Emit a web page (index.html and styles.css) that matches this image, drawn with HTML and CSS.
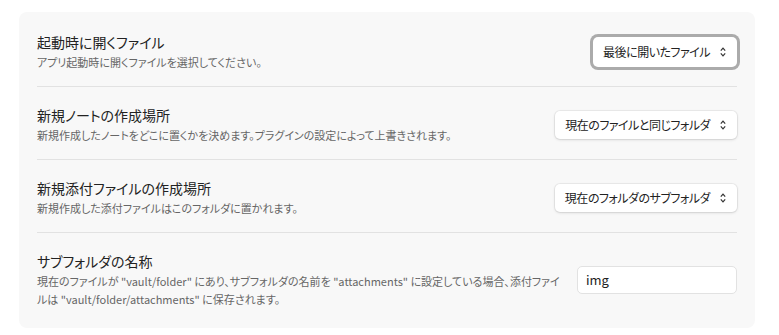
FILE: index.html
```html
<!DOCTYPE html>
<html>
	<head>
<meta charset="UTF-8">
<title>ファイルとリンク</title>
<link rel="stylesheet" href="styles.css">
	</head>
	<body>
        <div class="paneel">
            <div class="item eerste">
                <div class="info">
                    <div class="naam">起動時に開くファイル</div>
                    <div class="uitleg">アプリ起動時に開くファイルを選択してください。</div>
                </div>
                <div class="keuze focus">
                    <span>最後に開いたファイル</span>
                    <svg class="pijl" width="6" height="10" viewBox="0 0 6 10"><path d="M0.8 3.6 L3 1.2 L5.2 3.6 M0.8 6.4 L3 8.8 L5.2 6.4" fill="none" stroke="#333" stroke-width="1.2"/></svg>
                </div>
            </div>
            <div class="item">
                <div class="info">
                    <div class="naam">新規ノートの作成場所</div>
                    <div class="uitleg">新規作成したノートをどこに置くかを決めます。プラグインの設定によって上書きされます。</div>
                </div>
                <div class="keuze">
                    <span>現在のファイルと同じフォルダ</span>
                    <svg class="pijl" width="6" height="10" viewBox="0 0 6 10"><path d="M0.8 3.6 L3 1.2 L5.2 3.6 M0.8 6.4 L3 8.8 L5.2 6.4" fill="none" stroke="#333" stroke-width="1.2"/></svg>
                </div>
            </div>
            <div class="item">
                <div class="info">
                    <div class="naam">新規添付ファイルの作成場所</div>
                    <div class="uitleg">新規作成した添付ファイルはこのフォルダに置かれます。</div>
                </div>
                <div class="keuze">
                    <span>現在のフォルダのサブフォルダ</span>
                    <svg class="pijl" width="6" height="10" viewBox="0 0 6 10"><path d="M0.8 3.6 L3 1.2 L5.2 3.6 M0.8 6.4 L3 8.8 L5.2 6.4" fill="none" stroke="#333" stroke-width="1.2"/></svg>
                </div>
            </div>
            <div class="item laatste">
                <div class="info">
                    <div class="naam">サブフォルダの名称</div>
                    <div class="uitleg">現在のファイルが "vault/folder" にあり、サブフォルダの名前を "attachments" に設定している場合、添付ファイルは "vault/folder/attachments" に保存されます。</div>
                </div>
                <input class="veld" type="text" value="img">
            </div>
        </div>
	</body>
</html>
```

FILE: styles.css
```css
body {
    margin: 0;
    background: #fff;
    font-family: "Noto Sans CJK JP", "Noto Sans", sans-serif;
    font-feature-settings: "palt";
    color: #222;
}
.paneel {
    margin: 12px 24px 0 19px;
    width: 700px;
    padding: 0 18px 5px;
    background: #f8f8f8;
    border-radius: 8px;
}
.item {
    display: flex;
    align-items: center;
    padding: 18px 0 15px;
    border-bottom: 1px solid #e2e2e2;
}
.item.eerste {
    padding-top: 20px;
}
.item.laatste {
    border-bottom: none;
}
.info {
    flex: 1;
    margin-right: 16px;
}
.naam {
    font-size: 14px;
    line-height: 20px;
    color: #222;
}
.uitleg {
    font-size: 11px;
    line-height: 18px;
    margin-top: 1px;
    color: #666;
}
.keuze {
    display: flex;
    align-items: center;
    height: 28px;
    padding: 0 11px 0 10px;
    background: #fff;
    border-radius: 5px;
    box-shadow: 0 0 0 1px rgba(0,0,0,0.05), 0 1px 3px rgba(0,0,0,0.12);
    font-size: 12px;
    letter-spacing: -0.5px;
    color: #222;
    white-space: nowrap;
}
.keuze span {
    margin-right: 10px;
}
.keuze.focus {
    height: 30px;
    box-shadow: 0 0 0 3px #ababab;
}
.pijl {
    display: block;
}
.veld {
    width: 160px;
    height: 28px;
    box-sizing: border-box;
    flex: none;
    padding: 0 8px;
    border: 1px solid #e2e2e2;
    border-radius: 5px;
    background: #fff;
    font-family: "Noto Sans CJK JP", "Noto Sans", sans-serif;
    font-size: 13px;
    color: #222;
    outline: none;
}
```
